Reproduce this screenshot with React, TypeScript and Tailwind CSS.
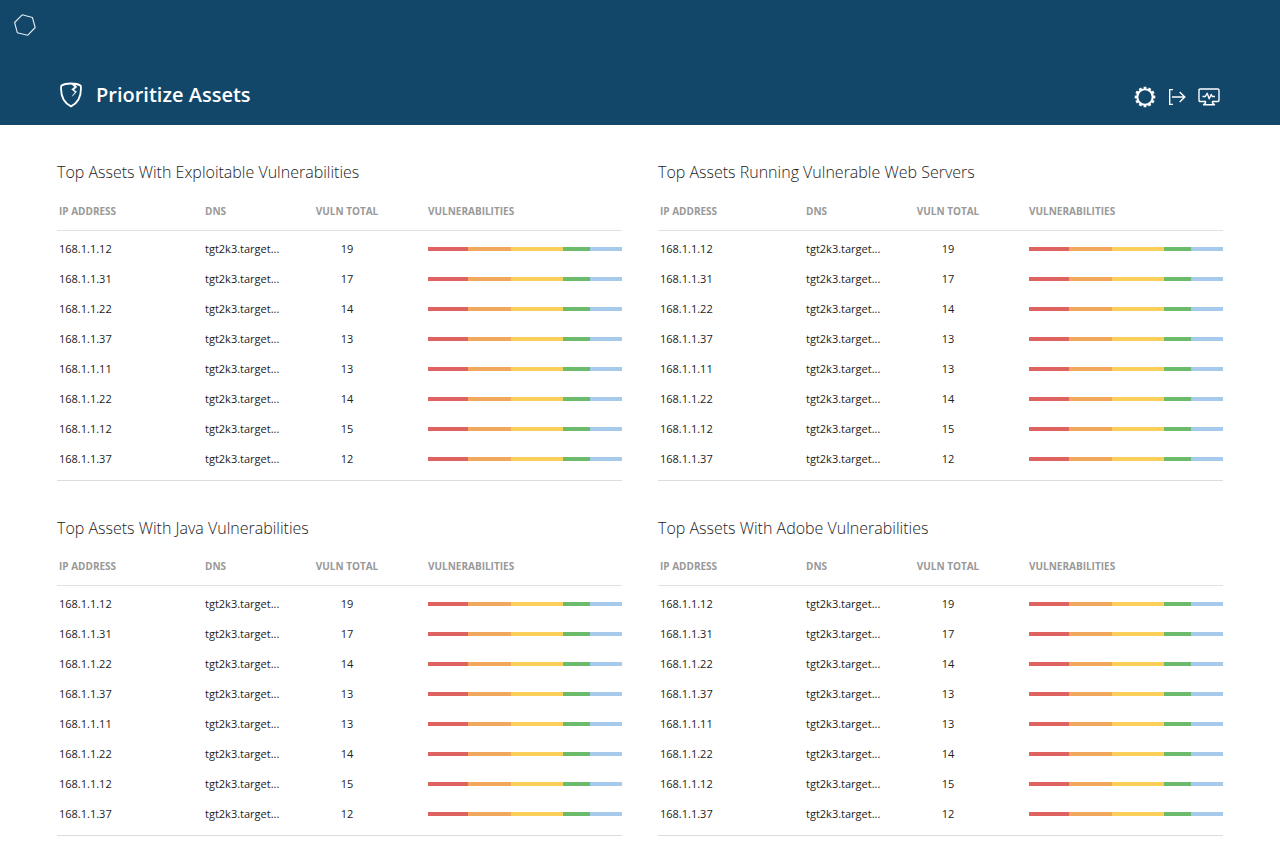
import React from "react";

type Asset = { ip: string; dns: string; total: number };

const assets: Asset[] = [
  { ip: "168.1.1.12", dns: "tgt2k3.target...", total: 19 },
  { ip: "168.1.1.31", dns: "tgt2k3.target...", total: 17 },
  { ip: "168.1.1.22", dns: "tgt2k3.target...", total: 14 },
  { ip: "168.1.1.37", dns: "tgt2k3.target...", total: 13 },
  { ip: "168.1.1.11", dns: "tgt2k3.target...", total: 13 },
  { ip: "168.1.1.22", dns: "tgt2k3.target...", total: 14 },
  { ip: "168.1.1.12", dns: "tgt2k3.target...", total: 15 },
  { ip: "168.1.1.37", dns: "tgt2k3.target...", total: 12 },
];

const panels = [
  "Top Assets With Exploitable Vulnerabilities",
  "Top Assets Running Vulnerable Web Servers",
  "Top Assets With Java Vulnerabilities",
  "Top Assets With Adobe Vulnerabilities",
];

function SeverityBar() {
  return (
    <div className="flex h-1 w-full" aria-hidden="true">
      <span className="grow-40 basis-0 bg-[#de6260]" />
      <span className="grow-44 basis-0 bg-[#f1a75c]" />
      <span className="grow-52 basis-0 bg-[#fccf5b]" />
      <span className="grow-28 basis-0 bg-[#6cbb6c]" />
      <span className="grow-32 basis-0 bg-[#a5caec]" />
    </div>
  );
}

function AssetPanel({ title }: { title: string }) {
  return (
    <section className="min-w-0">
      <h2 className="text-base leading-6 font-light text-[#1c1c1c]">{title}</h2>
      <div className="mt-3 border-b border-[#dcdcdc] pb-1.5">
        <table className="w-full table-fixed border-collapse text-left text-[11px] leading-4">
          <colgroup>
            <col className="w-[148px]" />
            <col className="w-[93px]" />
            <col className="w-[98px]" />
            <col />
          </colgroup>
          <thead>
            <tr className="h-[34px] border-b border-[#e2e2e2] text-[10px] text-[#999999]">
              <th scope="col" className="pb-1 pl-0.5 font-bold">IP ADDRESS</th>
              <th scope="col" className="pb-1 font-bold">DNS</th>
              <th scope="col" className="pb-1 text-center font-bold">VULN TOTAL</th>
              <th scope="col" className="pb-1 pl-8 font-bold">VULNERABILITIES</th>
            </tr>
          </thead>
          <tbody className="text-[#222222] before:block before:h-[3px]">
            {assets.map((asset, i) => (
              <tr key={i} className="h-[30px]">
                <td className="pl-0.5">{asset.ip}</td>
                <td>{asset.dns}</td>
                <td className="text-center">{asset.total}</td>
                <td className="pl-8">
                  <SeverityBar />
                </td>
              </tr>
            ))}
          </tbody>
        </table>
      </div>
    </section>
  );
}

function Logo() {
  return (
    <svg width="24" height="24" viewBox="0 0 24 24" fill="none" stroke="#e4ecf2" strokeWidth="1.1" strokeLinejoin="round">
      <path d="M9.2 1.8 19.4 4.5 22.2 14.5 14.6 22.3 4.3 19.7 1.6 9.5Z" />
    </svg>
  );
}

function ShieldIcon() {
  return (
    <svg width="24" height="26" viewBox="0 0 24 26" fill="none" stroke="#fff" strokeWidth="1.8" strokeLinejoin="round">
      <path d="M12 1.5C8 1.5 4.7 2.2 2.2 3.8 1.4 13 4.4 20.6 12 24.4 19.6 20.6 22.6 13 21.8 3.8 19.3 2.2 16 1.5 12 1.5Z" />
      <path d="M12.4 1.8 15.6 5 12.6 7.5 16.2 10 13.2 14.2 17.6 9.8 14.8 7.7 17.8 5.1 16 2.2Z" fill="#fff" stroke="#fff" strokeWidth="0.5" />
    </svg>
  );
}

function GearIcon() {
  return (
    <svg width="22" height="22" viewBox="0 0 22 22" fill="none" stroke="#fff">
      <circle cx="11" cy="11" r="7.7" strokeWidth="2.1" />
      <circle cx="11" cy="11" r="9.2" strokeWidth="2.2" pathLength="24" strokeDasharray="1.15 0.85" strokeDashoffset="0.575" />
    </svg>
  );
}

function ExitIcon() {
  return (
    <svg width="18" height="18" viewBox="0 0 18 18" fill="none" stroke="#fff" strokeWidth="1.4">
      <path d="M5 1.6H1.7V16.4H5M4 9H16.7M11.7 3.9 16.8 9 11.7 14.1" />
    </svg>
  );
}

function MonitorIcon() {
  return (
    <svg width="22" height="18" viewBox="0 0 22 18" fill="none" stroke="#fff" strokeWidth="1.4" strokeLinejoin="round">
      <path d="M7.5 13.5H2.2Q1 13.5 1 12.3V2.2Q1 1 2.2 1H19.8Q21 1 21 2.2V12.3Q21 13.5 19.8 13.5H14.5V15L16.5 16.8H5.5L7.5 15Z" />
      <path d="M4.5 8.5H7.3L9.2 5.3 11.2 10.8 13.2 6.5 14.2 8.5H17" />
    </svg>
  );
}

export default function App() {
  return (
    <div className="min-h-screen bg-white font-['Open_Sans','Noto_Sans',sans-serif]">
      <header className="h-[125px] bg-[#124769]">
        <a href="#" aria-label="Home" className="block h-[81px] w-fit pt-[13px] pl-[13px]">
          <Logo />
        </a>
        <div className="flex items-center justify-between pr-[60px] pl-[59px]">
          <div className="flex items-center gap-[13px]">
            <ShieldIcon />
            <h1 className="text-[20px] leading-7 font-semibold text-white">Prioritize Assets</h1>
          </div>
          <div className="flex items-center gap-3 pt-1">
            <button type="button" aria-label="Settings"><GearIcon /></button>
            <button type="button" aria-label="Sign out"><ExitIcon /></button>
            <button type="button" aria-label="Monitoring"><MonitorIcon /></button>
          </div>
        </div>
      </header>
      <main className="grid grid-cols-2 gap-x-9 gap-y-[35px] px-[57px] pt-[35px] pb-5">
        {panels.map((title) => (
          <AssetPanel key={title} title={title} />
        ))}
      </main>
    </div>
  );
}
